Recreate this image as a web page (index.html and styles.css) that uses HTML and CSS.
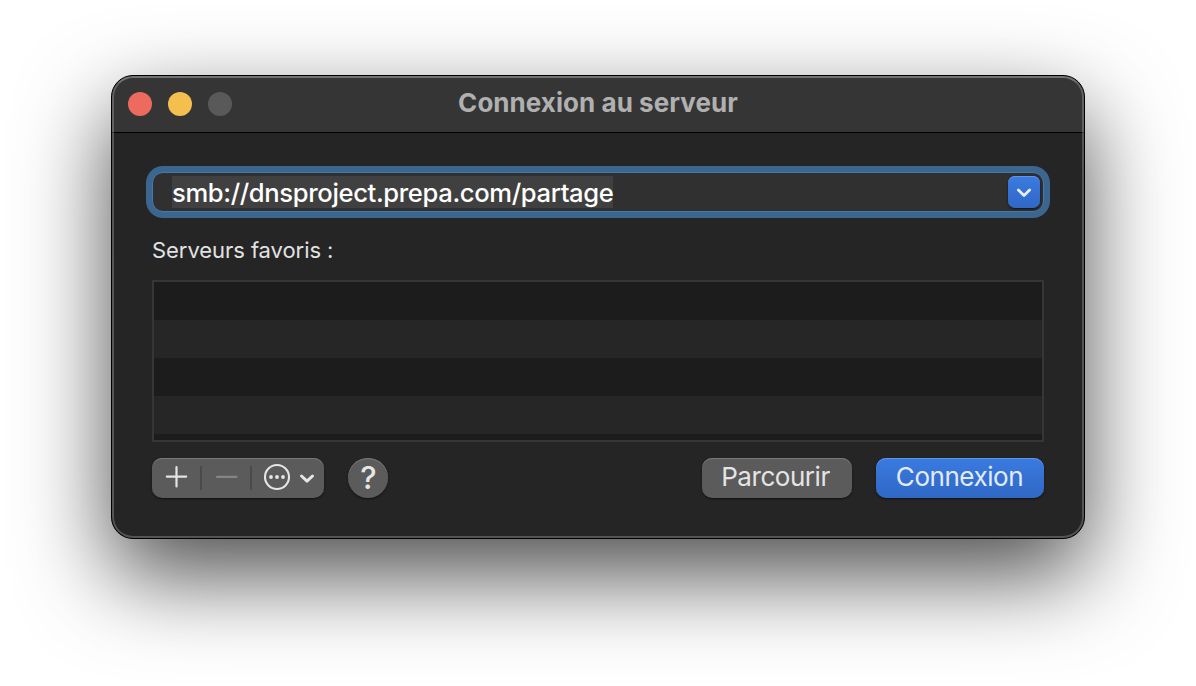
FILE: index.html
```html
<!DOCTYPE html>
<html lang="fr">
<head>
<meta charset="utf-8">
<title>Connexion au serveur</title>
<link rel="stylesheet" href="styles.css">
</head>
<body>
<main class="window">
  <header class="titlebar">
    <div class="lights">
      <span class="light light-close"></span>
      <span class="light light-minimize"></span>
      <span class="light light-disabled"></span>
    </div>
    <h1 class="title">Connexion au serveur</h1>
  </header>
  <section class="content">
    <div class="combo">
      <span class="address">smb://dnsproject.prepa.com/partage</span>
      <span class="combo-button">
        <svg width="32" height="32" viewBox="0 0 32 32"><path d="M10.4 14l5.6 5.4 5.6-5.4" fill="none" stroke="#e9effa" stroke-width="2.8" stroke-linecap="round" stroke-linejoin="round"/></svg>
      </span>
    </div>
    <p class="label"><span class="label-text">Serveurs favoris :</span></p>
    <div class="list">
      <div class="row"></div>
      <div class="row"></div>
      <div class="row"></div>
      <div class="row"></div>
      <div class="row"></div>
    </div>
    <footer class="actions">
      <div class="segments">
        <svg width="172" height="40" viewBox="0 0 172 40" fill="none" stroke-linecap="round" stroke-linejoin="round">
          <path d="M49 8v24M99 8v24" stroke="#4a4a4a" stroke-width="2" stroke-linecap="butt"/>
          <path d="M24.5 9.2v19.2M14.8 18.6h19.4" stroke="#e4e4e4" stroke-width="2.2"/>
          <path d="M65 18.8h19.4" stroke="#858585" stroke-width="2.2"/>
          <circle cx="125" cy="19" r="12" stroke="#e6e6e6" stroke-width="2.1"/>
          <g fill="#e6e6e6"><circle cx="119" cy="19" r="1.9"/><circle cx="125" cy="19" r="1.9"/><circle cx="131" cy="19" r="1.9"/></g>
          <path d="M149.5 18l5.5 5.2 5.5-5.2" stroke="#e6e6e6" stroke-width="3"/>
        </svg>
      </div>
      <div class="help"><span class="help-mark">?</span></div>
      <div class="button browse"><span class="browse-text">Parcourir</span></div>
      <div class="button connect"><span class="connect-text">Connexion</span></div>
    </footer>
  </section>
</main>
</body>
</html>
```
FILE: styles.css
```css
* { box-sizing: border-box; }
body {
  margin: 0;
  width: 1196px;
  height: 686px;
  padding: 75px 111px;
  overflow: hidden;
  background: #fff;
  font-family: Inter, "Liberation Sans", sans-serif;
}
.window {
  position: relative;
  width: 974px;
  height: 464px;
  border: 1px solid #000;
  border-radius: 22px;
  overflow: hidden;
  background: #252525;
  box-shadow: 0 36px 90px rgba(0, 0, 0, .7);
}
/* light rim just inside the window edge */
.window::after {
  content: "";
  position: absolute;
  inset: 0;
  border: 2px solid rgba(255, 255, 255, .22);
  border-top-color: rgba(255, 255, 255, .3);
  border-radius: 21px;
}
.titlebar {
  display: grid;
  grid-template-columns: 1fr auto 1fr;
  align-items: center;
  height: 57px;
  padding: 0 16px;
  background: #353535;
  border-bottom: 1px solid #000;
}
.lights { display: flex; gap: 16px; }
.light { width: 24px; height: 24px; border-radius: 50%; }
.light-close { background: #ed6a5e; }
.light-minimize { background: #f5bf4f; }
.light-disabled { background: #595959; }
.title {
  margin: 0;
  font-size: 26px;
  line-height: 30px;
  font-weight: 700;
  letter-spacing: .05px;
  color: #b0b0b0;
  padding-bottom: 2px;
}
.content { padding: 39px 40px 0; }
.combo {
  display: flex;
  align-items: center;
  justify-content: space-between;
  height: 40px;
  padding: 0 3px 0 19px;
  background: #303030;
  border: 1px solid #4579ab;
  border-radius: 11px;
  box-shadow: 0 0 0 6px #3a668f;
}
.address {
  height: 32px;
  font-size: 25.6px;
  font-weight: 500;
  line-height: 33px;
  letter-spacing: -.36px;
  color: #fff;
  background: #404040;
  white-space: nowrap;
}
.combo-button {
  width: 32px;
  height: 32px;
  border-radius: 7px;
  background: linear-gradient(#3b7be1, #2f67c4);
  box-shadow: inset 0 1px #6295e6, 0 1px 2px #111;
}
.label {
  margin: 24px 0 0;
  font-size: 22px;
  line-height: 28px;
  letter-spacing: -.06px;
  color: #e2e2e2;
}
.list {
  height: 162px;
  margin-top: 16px;
  border: 2px solid #363636;
  overflow: hidden;
}
.row { height: 38px; background: #1c1c1c; }
.row:nth-child(even) { background: #262626; }
.actions { display: flex; height: 40px; margin-top: 16px; }
.segments, .help, .button {
  height: 40px;
  border-radius: 10px;
  background: #5b5b5b;
  box-shadow: inset 0 1px #7a7a7a, 0 1px 2px #111;
}
.segments { width: 172px; }
.help {
  width: 40px;
  margin-left: 24px;
  padding-left: 1px;
  border-radius: 50%;
  font-size: 31px;
  line-height: 40px;
  font-weight: 500;
  text-align: center;
  color: #e6e6e6;
}
.button {
  font-size: 26px;
  line-height: 38px;
  letter-spacing: -.45px;
  text-align: center;
  color: #e4e4e4;
}
.browse { width: 150px; margin-left: auto; padding-right: 3px; }
.connect {
  width: 168px;
  margin-left: 24px;
  padding-right: 1px;
  color: #e2ebfa;
  background: linear-gradient(#3a7ae0, #3068c5);
  box-shadow: inset 0 1px #6295e6, 0 1px 2px #111;
}
```
